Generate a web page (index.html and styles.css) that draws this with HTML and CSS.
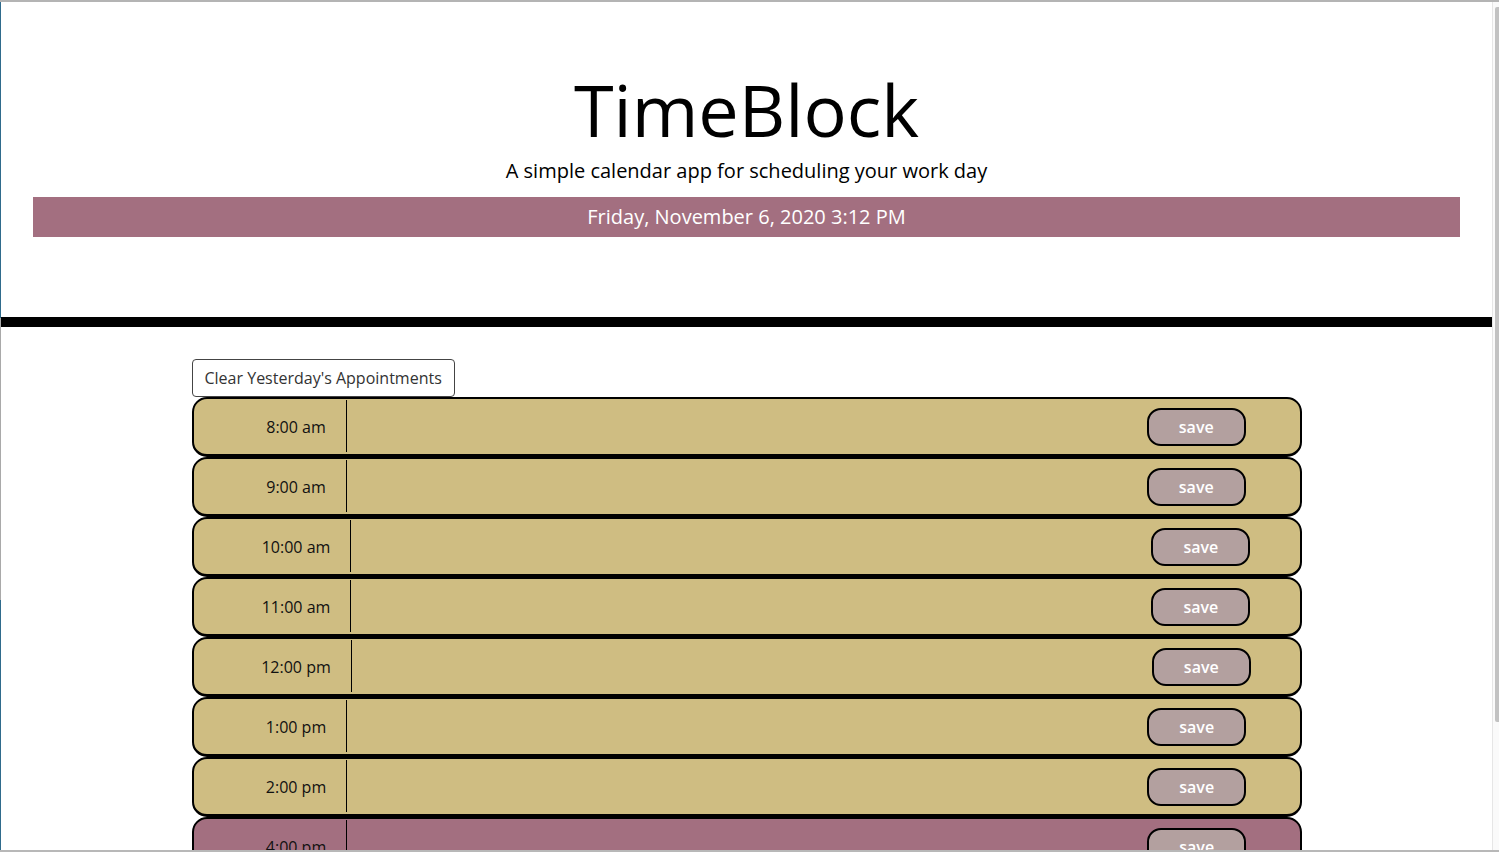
FILE: index.html
```html
<!DOCTYPE html>
<html lang="en">
<head>
<meta charset="UTF-8">
<title>TimeBlock</title>
<link rel="stylesheet" href="styles.css">
</head>
<body>
<div class="window">
  <div class="edge"></div>
  <div class="page">
    <header class="jumbotron">
      <h1 class="title">TimeBlock</h1>
      <p class="lead">A simple calendar app for scheduling your work day</p>
      <p class="current-day">Friday, November 6, 2020 3:12 PM</p>
    </header>
    <main class="container">
      <button class="clear-btn">Clear Yesterday's Appointments</button>
      <div class="time-block past">
        <div class="hour">8:00 am</div>
        <textarea class="description"></textarea>
        <button class="save-btn">save</button>
      </div>
      <div class="time-block past">
        <div class="hour">9:00 am</div>
        <textarea class="description"></textarea>
        <button class="save-btn">save</button>
      </div>
      <div class="time-block past">
        <div class="hour">10:00 am</div>
        <textarea class="description"></textarea>
        <button class="save-btn">save</button>
      </div>
      <div class="time-block past">
        <div class="hour">11:00 am</div>
        <textarea class="description"></textarea>
        <button class="save-btn">save</button>
      </div>
      <div class="time-block past">
        <div class="hour">12:00 pm</div>
        <textarea class="description"></textarea>
        <button class="save-btn">save</button>
      </div>
      <div class="time-block past">
        <div class="hour">1:00 pm</div>
        <textarea class="description"></textarea>
        <button class="save-btn">save</button>
      </div>
      <div class="time-block past">
        <div class="hour">2:00 pm</div>
        <textarea class="description"></textarea>
        <button class="save-btn">save</button>
      </div>
      <div class="time-block future">
        <div class="hour">4:00 pm</div>
        <textarea class="description"></textarea>
        <button class="save-btn">save</button>
      </div>
      <div class="time-block future">
        <div class="hour">5:00 pm</div>
        <textarea class="description"></textarea>
        <button class="save-btn">save</button>
      </div>
    </main>
  </div>
  <div class="scrollbar"><div class="thumb"></div></div>
</div>
</body>
</html>
```
FILE: styles.css
```css
* { box-sizing: border-box; }

html, body {
  margin: 0;
  padding: 0;
  height: 852px;
  overflow: hidden;
  background: #fff;
}

body {
  font-family: "Open Sans", "Noto Sans", sans-serif;
  color: #000;
}

.window {
  height: 852px;
  display: flex;
  border-top: 2px solid #b4b4b4;
  border-bottom: 2px solid #b8b8b8;
  overflow: hidden;
}

.edge {
  width: 1px;
  flex: none;
  background: linear-gradient(to bottom, #2f6b8c 0, #2f6b8c 316px, #a9a9a9 316px, #a9a9a9 598px, #2f6b8c 598px);
}

.page {
  flex: 1;
  min-width: 0;
  overflow: hidden;
}

.scrollbar {
  width: 7px;
  flex: none;
  background: #fafafa;
  border-left: 1px solid #e6e6e6;
  padding-top: 5px;
  display: flex;
  justify-content: flex-end;
}

.thumb {
  width: 4px;
  height: 715px;
  background: #c2c2c2;
  border-radius: 2px 0 0 2px;
}

/* header */
.jumbotron {
  padding: 64px 32px;
  margin-bottom: 32px;
  border-bottom: 10px solid #000;
  text-align: center;
}

.title {
  font-size: 72px;
  line-height: 1.2;
  font-weight: 400;
  margin: 0 0 4px;
}

.lead {
  font-size: 20px;
  line-height: 30px;
  margin: 0 0 11px;
}

.current-day {
  font-size: 20px;
  line-height: 30px;
  padding: 5px 0;
  margin: 0 0 16px;
  background: #a36f80;
  color: #fff;
}

/* schedule */
.container {
  width: 1140px;
  margin: 0 auto;
  padding: 0 15px;
}

.clear-btn {
  display: block;
  font-family: inherit;
  font-size: 16px;
  line-height: 24px;
  padding: 6px 12px;
  color: #333;
  background: #fff;
  border: 1px solid #444;
  border-radius: 4px;
}

.time-block {
  height: 60px;
  display: flex;
  align-items: center;
  justify-content: center;
  border: 2px solid #000;
  border-bottom-width: 3px;
  border-radius: 15px;
}

.time-block.past { background: #cfbd82; }
.time-block.future { background: #a36f80; }

.hour {
  align-self: stretch;
  margin: 1px 0 2px;
  padding: 2px 20px 0;
  border-right: 1px solid #000;
  display: flex;
  align-items: center;
  font-size: 16px;
  color: #111;
  white-space: nowrap;
}

.description {
  width: 800px;
  height: 100%;
  background: transparent;
  border: none;
  resize: none;
  font-family: inherit;
  font-size: 16px;
  outline: none;
}

.save-btn {
  width: 99px;
  height: 38px;
  margin-right: 1px;
  font-family: inherit;
  font-size: 16px;
  font-weight: 600;
  color: #fff;
  background: #b3a09f;
  border: 2px solid #000;
  border-radius: 14px;
  padding: 1px 0 0;
}
```
